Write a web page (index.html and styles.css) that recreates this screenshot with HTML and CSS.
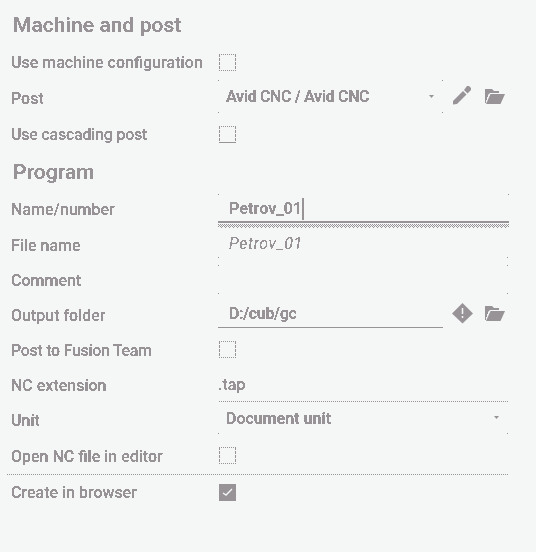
FILE: index.html
```html
<!DOCTYPE html>
<html lang="en">
<head>
<meta charset="utf-8">
<title>Post settings</title>
<link rel="stylesheet" href="styles.css">
</head>
<body>
<svg class="symbols" aria-hidden="true">
  <filter id="crisp" color-interpolation-filters="sRGB"><feComponentTransfer><feFuncA type="discrete" tableValues="0 0 1 1 1"/></feComponentTransfer></filter>
  <symbol id="folder" viewBox="0 0 20 16"><path d="M0 0h7l2 2h5v2H5L3 6v2H2v3H1v3H0z"/><path d="M5.500 5H20l-4.500 10H1z"/></symbol>
</svg>
<main class="panel">
  <h2 class="heading">Machine and post</h2>
  <div class="row h36"><span class="label">Use machine configuration</span><i class="check"></i></div>
  <div class="row h33"><span class="label post">Post</span>
    <div class="field corners select short"><b class="value tight">Avid CNC / Avid CNC</b><i class="caret"></i></div>
    <svg class="icon pencil" viewBox="0 0 20 20"><path d="M1 16 11 6l3.500 3.500L5 19l-4 .500z"/><path d="m12 5 3-4h2l2 2v2l-3.500 3.500z"/></svg>
    <svg class="icon folder"><use href="#folder"/></svg>
  </div>
  <div class="row h42"><span class="label cascade">Use cascading post</span><i class="check solid-base"></i></div>
  <h2 class="heading program">Program</h2>
  <div class="row h38"><span class="label">Name/number</span>
    <div class="field active"><b class="value petrov">Petrov_01</b><i class="cursor"></i></div></div>
  <div class="row h34"><span class="label">File name</span>
    <div class="field corners-bottom filename"><em class="value">Petrov_01</em></div></div>
  <div class="row h35"><span class="label">Comment</span><div class="field corners comment"></div></div>
  <div class="row h35"><span class="label">Output folder</span>
    <div class="field short output"><b class="value tight">D:/cub/gc</b></div>
    <svg class="icon diamond" viewBox="0 0 21 21"><path d="M10.500 0 21 10.500 10.500 20.500 0 10.500z"/><path class="mark" d="M10.500 5v6m0 2v2"/></svg>
    <svg class="icon folder"><use href="#folder"/></svg>
  </div>
  <div class="row h35"><span class="label fusion">Post to Fusion Team</span><i class="check"></i></div>
  <div class="row h35 extension"><span class="label">NC extension</span><span class="tap">.tap</span></div>
  <div class="row h35"><span class="label">Unit</span>
    <div class="field corners-bottom select unit"><b class="value">Document unit</b><i class="caret"></i></div></div>
  <div class="row h37"><span class="label">Open NC file in editor</span><i class="check"></i></div>
  <div class="row h36 browser"><span class="label">Create in browser</span>
    <svg class="check checked" viewBox="0 0 17 17"><path d="m4 9 3 2 6-6"/></svg></div>
</main>
</body>
</html>
```
FILE: styles.css
```css
:root { --ink: #989397; --paper: #f5f7f6; --dot: linear-gradient(var(--ink), var(--ink)); }
* { box-sizing: border-box; }
body { margin: 0; width: 536px; height: 552px; overflow: hidden; background: var(--paper); color: var(--ink); font: 500 16px/20px Roboto, sans-serif; }
.symbols { position: absolute; width: 0; height: 0; }
.panel { width: 509px; }
.heading, .label, .value, .tap { filter: url(#crisp); }
.heading { margin: 0; padding: 3px 0 0 13px; height: 44px; font: 600 21px/44px Roboto, sans-serif; letter-spacing: .05px; }
.program { height: 35px; line-height: 33px; padding-top: 1px; }
.row { display: flex; align-items: center; }
.h33 { height: 33px; } .h34 { height: 34px; } .h35 { height: 35px; } .h36 { height: 36px; }
.h37 { height: 37px; } .h38 { height: 38px; } .h42 { height: 42px; }
.label { flex: 0 0 207px; margin-left: 11px; padding-top: 2px; white-space: nowrap; }
.post { padding-top: 5px; }
.cascade { letter-spacing: -.22px; }
.fusion { letter-spacing: -.3px; }
.check { width: 17px; height: 17px; margin-left: 1px; flex: none;
  background: repeating-linear-gradient(90deg, var(--ink) 0 1px, transparent 1px 2px) top / 100% 1px no-repeat,
  repeating-linear-gradient(90deg, var(--ink) 0 1px, transparent 1px 2px) bottom / 100% 1px no-repeat,
  repeating-linear-gradient(var(--ink) 0 3px, transparent 3px 4px) left / 1px 100% no-repeat,
  repeating-linear-gradient(var(--ink) 0 3px, transparent 3px 4px) right / 1px 100% no-repeat; }
.solid-base { border-bottom: 1px solid var(--ink); background-position: top, 0 20px, left, right; }
.checked { background: var(--ink); }
.checked path { fill: none; stroke: var(--paper); stroke-width: 1.4; }
.field { flex: none; width: 290px; height: 30px; display: flex; align-items: center; padding-left: 11px; white-space: nowrap; }
.short { width: 225px; }
.select { height: 33px; padding-left: 8px; }
.value { font-weight: 700; }
.tight { letter-spacing: -.34px; }
.petrov { letter-spacing: .1px; }
.corners { background: var(--dot) 0 0 / 1px 1px no-repeat, var(--dot) 100% 0 / 1px 1px no-repeat,
  var(--dot) 0 100% / 1px 1px no-repeat, var(--dot) 100% 100% / 1px 1px no-repeat; }
.corners-bottom { background: var(--dot) 0 100% / 1px 1px no-repeat, var(--dot) 100% 100% / 1px 1px no-repeat; }
.caret { width: 5px; height: 3px; margin-left: auto; margin-right: 9px; background: var(--ink); clip-path: polygon(0 0, 100% 0, 50% 100%); }
.icon { fill: currentColor; flex: none; }
.pencil { width: 20px; height: 20px; margin-left: 9px; margin-top: -3px; }
.folder { width: 20px; height: 16px; margin-left: 12px; }
.pencil + .folder { margin-left: 13px; }
.active { width: 291px; height: 35px; align-self: flex-end; padding-bottom: 4px;
  background: repeating-linear-gradient(90deg, var(--ink) 0 1px, transparent 1px 2px) 0 31px / 100% 1px no-repeat,
  repeating-linear-gradient(90deg, transparent 0 1px, var(--ink) 1px 2px) 0 32px / 100% 1px no-repeat,
  repeating-linear-gradient(90deg, var(--ink) 0 1px, transparent 1px 2px) 0 33px / 100% 1px no-repeat,
  repeating-linear-gradient(90deg, transparent 0 3px, var(--ink) 3px 4px) 0 34px / 100% 1px no-repeat,
  var(--dot) 0 28px / 100% 2px no-repeat, var(--dot) 0 1px / 1px 1px no-repeat, var(--dot) 100% 1px / 1px 1px no-repeat; }
.active .value { padding-top: 1px; }
.cursor { width: 2px; height: 22px; background: var(--ink); }
.filename { align-self: flex-start; }
.filename .value { font-weight: 400; letter-spacing: .55px; padding-top: 2px; }
.comment { width: 290px; height: 29px; }
.output { align-self: flex-start; height: 31px; border-bottom: 1px solid var(--ink); padding-top: 4px; }
.diamond { width: 21px; height: 21px; margin: -2px 0 0 9px; }
.diamond + .folder { margin: -2px 0 0 12px; }
.mark { stroke: var(--paper); stroke-width: 1.5; }
.extension { background: repeating-linear-gradient(90deg, var(--ink) 0 1px, transparent 1px 2px) 219px 34px / 290px 1px no-repeat; }
.unit { align-self: flex-start; height: 32px; padding-top: 2px; }
.unit .caret { margin-top: -3px; }
.browser { background: repeating-linear-gradient(90deg, var(--ink) 0 1px, transparent 1px 2px) 7px 0 / 502px 1px no-repeat; }
```
